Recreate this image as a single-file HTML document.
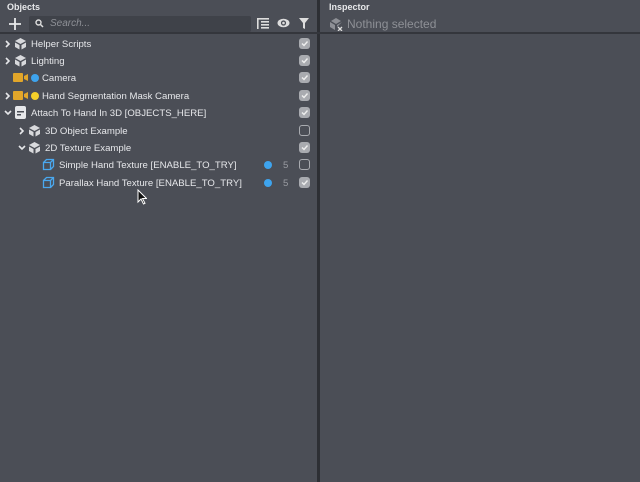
<!DOCTYPE html>
<html><head><style>
*{margin:0;padding:0;box-sizing:border-box}
body{width:640px;height:482px;background:#4b4e56;font-family:"Liberation Sans",sans-serif;color:#e4e5e8;font-size:10px;position:relative;overflow:hidden}
.a{position:absolute}
.hdr{font-size:9px;font-weight:bold;color:#e8e9eb}
.row{position:absolute;left:0;width:317px;height:17px;line-height:19px;font-size:9.6px;color:#e6e7ea}
.cb{position:absolute;left:299px;top:3px;width:11px;height:11px;border-radius:3px;background:#a9abb0}
.cb.e{background:none;border:1.3px solid #a9abb0}
.cb svg{position:absolute;left:1px;top:1px}
.dot{position:absolute;width:8px;height:8px;border-radius:50%;top:4.5px}
.num{position:absolute;left:283px;color:#9a9ca2}
</style></head><body>
<div class="a" style="left:317px;top:0;width:3px;height:482px;background:#2d2f34"></div>
<div class="a" style="left:0;top:32px;width:640px;height:2px;background:#34363c"></div>
<div class="a hdr" style="left:7px;top:2px">Objects</div>
<div class="a hdr" style="left:329px;top:2px">Inspector</div>
<svg class="a" style="left:9px;top:18px" width="12" height="12"><path d="M6 0V12M0 6H12" stroke="#e8e9eb" stroke-width="1.8"/></svg>
<div class="a" style="left:29px;top:16px;width:222px;height:16px;background:#3f4249;border-radius:2px"></div>
<svg class="a" style="left:35px;top:19px" width="9" height="9"><circle cx="3.5" cy="3.5" r="2.5" stroke="#ddd" stroke-width="1.4" fill="none"/><line x1="5.5" y1="5.5" x2="8" y2="8" stroke="#ddd" stroke-width="1.5"/></svg>
<div class="a" style="left:50px;top:18px;font-style:italic;color:#8e9096;font-size:10px">Search...</div>
<svg class="a" style="left:257px;top:18px" width="12" height="11" fill="#ddd"><rect x="0" y="0" width="12" height="1.6"/><rect x="0" y="0" width="1.6" height="11"/><rect x="4" y="3" width="8" height="1.6"/><rect x="4" y="6" width="8" height="1.6"/><rect x="4" y="9" width="8" height="1.6"/></svg>
<svg class="a" style="left:277px;top:18px" width="13" height="10"><ellipse cx="6.5" cy="5" rx="6" ry="4.3" fill="#ddd"/><circle cx="6.5" cy="5" r="2.6" fill="#4b4e56"/><circle cx="6.5" cy="5" r="1.3" fill="#ddd"/></svg>
<svg class="a" style="left:299px;top:18px" width="10" height="11"><path d="M0 0H10L6 5V11L4 10V5Z" fill="#ddd"/></svg>
<svg class="a" style="left:329px;top:17px" width="14" height="14"><path d="M2 4L7 1L12 4L7 7Z" fill="#8e9096"/><path d="M1 5L6 8V13L1 10Z" fill="#8e9096"/><path d="M13 5L8 8V10Z" fill="#8e9096"/><path d="M9 10L13 14M13 10L9 14" stroke="#ddd" stroke-width="1.3"/></svg>
<div class="a" style="left:347px;top:17px;font-size:12px;color:#8e9096">Nothing selected</div>

<div class="row" style="top:35px"><svg class="a" style="left:5px;top:5px" width="6" height="8"><path d="M1 1L4 4L1 7" stroke="#e6e7ea" stroke-width="1.6" fill="none"/></svg><svg class="a" style="left:14px;top:2px" width="13" height="13"><path d="M6.5 1L12 4L6.5 7L1 4Z" fill="#d8d9dc"/><path d="M1 5.5L5.5 8V12.5L1 10Z" fill="#d8d9dc"/><path d="M12 5.5L7.5 8V12.5L12 10Z" fill="#d8d9dc"/></svg><span class="a" style="left:31px">Helper Scripts</span><div class="cb"><svg width="9" height="9"><path d="M2 4.5L4 6.5L7.5 2.5" stroke="#eee" stroke-width="1.4" fill="none"/></svg></div></div>
<div class="row" style="top:52px"><svg class="a" style="left:5px;top:5px" width="6" height="8"><path d="M1 1L4 4L1 7" stroke="#e6e7ea" stroke-width="1.6" fill="none"/></svg><svg class="a" style="left:14px;top:2px" width="13" height="13"><path d="M6.5 1L12 4L6.5 7L1 4Z" fill="#d8d9dc"/><path d="M1 5.5L5.5 8V12.5L1 10Z" fill="#d8d9dc"/><path d="M12 5.5L7.5 8V12.5L12 10Z" fill="#d8d9dc"/></svg><span class="a" style="left:31px">Lighting</span><div class="cb"><svg width="9" height="9"><path d="M2 4.5L4 6.5L7.5 2.5" stroke="#eee" stroke-width="1.4" fill="none"/></svg></div></div>
<div class="row" style="top:69px"><svg class="a" style="left:13px;top:4px" width="16" height="9"><rect x="0" y="0" width="10" height="9" rx="1" fill="#e2a62a"/><path d="M11 3L15 1V8L11 6Z" fill="#e2a62a"/></svg><div class="dot" style="left:31px;background:#3ea4ee"></div><span class="a" style="left:42px">Camera</span><div class="cb"><svg width="9" height="9"><path d="M2 4.5L4 6.5L7.5 2.5" stroke="#eee" stroke-width="1.4" fill="none"/></svg></div></div>
<div class="row" style="top:87px"><svg class="a" style="left:5px;top:5px" width="6" height="8"><path d="M1 1L4 4L1 7" stroke="#e6e7ea" stroke-width="1.6" fill="none"/></svg><svg class="a" style="left:13px;top:4px" width="16" height="9"><rect x="0" y="0" width="10" height="9" rx="1" fill="#e2a62a"/><path d="M11 3L15 1V8L11 6Z" fill="#e2a62a"/></svg><div class="dot" style="left:31px;background:#f4d02a"></div><span class="a" style="left:42px">Hand Segmentation Mask Camera</span><div class="cb"><svg width="9" height="9"><path d="M2 4.5L4 6.5L7.5 2.5" stroke="#eee" stroke-width="1.4" fill="none"/></svg></div></div>
<div class="row" style="top:104px"><svg class="a" style="left:4px;top:6px" width="8" height="6"><path d="M1 1L4 4L7 1" stroke="#e6e7ea" stroke-width="1.6" fill="none"/></svg><svg class="a" style="left:15px;top:2px" width="11" height="13"><rect x="0" y="0" width="11" height="13" rx="2" fill="#e6e7ea"/><rect x="2" y="5" width="7" height="1.5" fill="#4b4e56"/><rect x="2" y="8" width="4" height="1.5" fill="#4b4e56"/></svg><span class="a" style="left:31px">Attach To Hand In 3D [OBJECTS_HERE]</span><div class="cb"><svg width="9" height="9"><path d="M2 4.5L4 6.5L7.5 2.5" stroke="#eee" stroke-width="1.4" fill="none"/></svg></div></div>
<div class="row" style="top:122px"><svg class="a" style="left:19px;top:5px" width="6" height="8"><path d="M1 1L4 4L1 7" stroke="#e6e7ea" stroke-width="1.6" fill="none"/></svg><svg class="a" style="left:28px;top:2px" width="13" height="13"><path d="M6.5 1L12 4L6.5 7L1 4Z" fill="#d8d9dc"/><path d="M1 5.5L5.5 8V12.5L1 10Z" fill="#d8d9dc"/><path d="M12 5.5L7.5 8V12.5L12 10Z" fill="#d8d9dc"/></svg><span class="a" style="left:45px">3D Object Example</span><div class="cb e"></div></div>
<div class="row" style="top:139px"><svg class="a" style="left:18px;top:6px" width="8" height="6"><path d="M1 1L4 4L7 1" stroke="#e6e7ea" stroke-width="1.6" fill="none"/></svg><svg class="a" style="left:28px;top:2px" width="13" height="13"><path d="M6.5 1L12 4L6.5 7L1 4Z" fill="#d8d9dc"/><path d="M1 5.5L5.5 8V12.5L1 10Z" fill="#d8d9dc"/><path d="M12 5.5L7.5 8V12.5L12 10Z" fill="#d8d9dc"/></svg><span class="a" style="left:45px">2D Texture Example</span><div class="cb"><svg width="9" height="9"><path d="M2 4.5L4 6.5L7.5 2.5" stroke="#eee" stroke-width="1.4" fill="none"/></svg></div></div>
<div class="row" style="top:156px"><svg class="a" style="left:42px;top:2px" width="13" height="13"><path d="M1.5 4.5H8.5V11.5H1.5Z M1.5 4.5L4.5 1.5H11.5V8.5L8.5 11.5 M8.5 4.5L11.5 1.5" stroke="#4aa8ef" stroke-width="1.3" fill="none"/></svg><span class="a" style="left:59px">Simple Hand Texture [ENABLE_TO_TRY]</span><div class="dot" style="left:264px;background:#3ea4ee"></div><span class="num">5</span><div class="cb e"></div></div>
<div class="row" style="top:174px"><svg class="a" style="left:42px;top:2px" width="13" height="13"><path d="M1.5 4.5H8.5V11.5H1.5Z M1.5 4.5L4.5 1.5H11.5V8.5L8.5 11.5 M8.5 4.5L11.5 1.5" stroke="#4aa8ef" stroke-width="1.3" fill="none"/></svg><span class="a" style="left:59px">Parallax Hand Texture [ENABLE_TO_TRY]</span><div class="dot" style="left:264px;background:#3ea4ee"></div><span class="num">5</span><div class="cb"><svg width="9" height="9"><path d="M2 4.5L4 6.5L7.5 2.5" stroke="#eee" stroke-width="1.4" fill="none"/></svg></div></div>
<svg class="a" style="left:137px;top:189px" width="10" height="16"><path d="M1 1V13L4 10L6.5 15L8 14.3L5.5 9.5H9.5Z" fill="#111" stroke="#fff" stroke-width="1"/></svg>
</body></html>
